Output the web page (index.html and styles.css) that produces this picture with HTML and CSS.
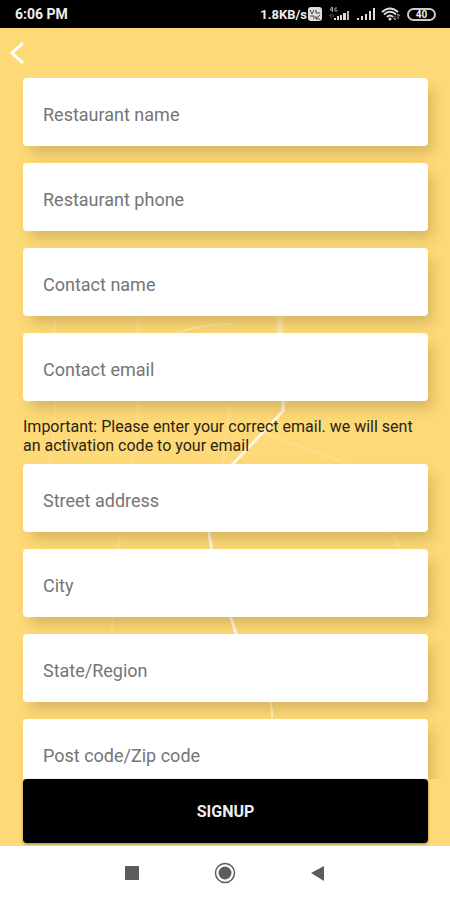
FILE: index.html
```html
<!DOCTYPE html>
<html lang="en">
<head>
    <meta charset="UTF-8">
    <meta name="viewport" content="width=device-width, initial-scale=1.0">
    <title>Restaurant Signup</title>
    <link rel="stylesheet" href="styles.css">
</head>
<body>
    <div class="status-bar">
        <span class="time">6:06 PM</span>
        <div class="status-icons">
            <span class="speed">1.8KB/s</span>
            <svg class="volte" width="14" height="14" viewBox="0 0 14 14">
                <rect x="0" y="0" width="14" height="14" rx="3" fill="#ddd"/>
                <path d="M2 3l2 4 2-4M8 3v3h4M2 9h4v3M8 12l4-4M8 9v3h4" fill="none" stroke="#444" stroke-width="1"/>
            </svg>
            <svg class="signal-4g" width="23" height="14" viewBox="0 0 23 14">
                <path d="M4 0L2 3h3M4.500 0v5M9 1H7v3h2V3" fill="none" stroke="#aaa" stroke-width="1"/>
                <path d="M3 7v5M1 9l2-2M5 7v3" fill="none" stroke="#555" stroke-width="1"/>
                <path d="M6 11h2v2H6zM9 9h2v4H9zM12 8h2v5h-2zM15 6h3v7h-3z" fill="#ddd"/>
                <path d="M19 4h2v9h-2z" fill="#bbb"/>
            </svg>
            <svg class="signal" width="18" height="14" viewBox="0 0 18 14">
                <path d="M0 11h2v2H0zM4 9h2v4H4zM8 7h2v6H8zM12 4h2v9h-2zM16 1h2v12h-2z" fill="#ddd"/>
            </svg>
            <svg class="wifi" width="20" height="14" viewBox="0 0 20 14">
                <path d="M1 5Q9 -2 17 5M3 7.500Q9 2 15 7.500M6 10Q9 7 12 10" fill="none" stroke="#ddd" stroke-width="2"/>
                <circle cx="9" cy="12" r="1.500" fill="#ddd"/>
                <path d="M14 13V9M12 11l2 2 1-1M17 7v5M16 8l1-1 2 2" fill="none" stroke="#999" stroke-width="1"/>
            </svg>
            <span class="battery">40</span>
        </div>
    </div>

    <main class="screen">
        <!-- faint road map behind the form -->
        <svg class="map" viewBox="0 0 450 818" preserveAspectRatio="none" fill="none" stroke="#fff">
            <g stroke-width="3" opacity="0.13">
                <path d="M55 280V395L40 500"/>
                <path d="M138 280V400L120 505L112 605"/>
                <path d="M230 375L222 440"/>
                <path d="M265 405L350 437L400 520"/>
            </g>
            <path d="M170 307Q200 296 232 296M180 305Q150 310 120 330" stroke-width="2" opacity="0.25"/>
            <path d="M280 280V305" stroke-width="7" opacity="0.3"/>
            <path d="M280 304Q284 340 283 383L232 437Q206 470 209 505L213 530L231 590L239 615" stroke-width="3" opacity="0.8"/>
            <path d="M239 615L268 665Q273 680 272 690" stroke-width="2" opacity="0.6"/>
        </svg>

        <header class="top-bar">
            <button class="back" type="button" aria-label="Back">
                <svg width="16" height="24" viewBox="0 0 16 24">
                    <path d="M15 2L4 12L15 22" fill="none" stroke="#fff" stroke-width="3"/>
                </svg>
            </button>
        </header>

        <form class="signup-form">
            <div class="fields">
                <input type="text" aria-label="Restaurant name" placeholder="Restaurant name">
                <input type="tel" aria-label="Restaurant phone" placeholder="Restaurant phone">
                <input type="text" aria-label="Contact name" placeholder="Contact name">
                <input type="email" aria-label="Contact email" placeholder="Contact email">
                <p class="note">Important: Please enter your correct email. we will sent an activation code to your email</p>
                <input type="text" aria-label="Street address" placeholder="Street address">
                <input type="text" aria-label="City" placeholder="City">
                <input type="text" aria-label="State/Region" placeholder="State/Region">
                <input type="text" aria-label="Post code/Zip code" placeholder="Post code/Zip code">
            </div>
            <button class="signup" type="submit">SIGNUP</button>
        </form>
    </main>

    <nav class="nav-bar">
        <button type="button" aria-label="Recent apps">
            <svg width="22" height="22" viewBox="0 0 22 22"><rect x="4" y="4" width="14" height="14" fill="#5c5c5c"/></svg>
        </button>
        <button type="button" aria-label="Home">
            <svg width="22" height="22" viewBox="0 0 22 22">
                <circle cx="11" cy="11" r="9.500" fill="none" stroke="#5c5c5c" stroke-width="1.500"/>
                <circle cx="11" cy="11" r="6.500" fill="#5c5c5c"/>
            </svg>
        </button>
        <button type="button" aria-label="Back">
            <svg width="22" height="22" viewBox="0 0 22 22"><path d="M4 11L17 4V19Z" fill="#5c5c5c"/></svg>
        </button>
    </nav>
</body>
</html>
```
FILE: styles.css
```css
* {
    box-sizing: border-box;
}
body {
    display: flex;
    flex-direction: column;
    height: 100vh;
    margin: 0;
    font-family: Roboto, sans-serif;
    background-color: #fff;
}
button {
    padding: 0;
    border: none;
    background: none;
    font-family: inherit;
    cursor: pointer;
}
svg {
    display: block;
}
.status-bar {
    display: flex;
    flex-shrink: 0;
    align-items: center;
    justify-content: space-between;
    height: 28px;
    padding: 0 14px 0 15px;
    background-color: #000;
    color: #eee;
    font-size: 14px;
    font-weight: 700;
}
.status-icons {
    display: flex;
    align-items: center;
    gap: 6px;
}
.speed {
    margin-right: -5px;
    font-size: 13px;
}
.battery {
    width: 29px;
    height: 13px;
    border: 2px solid #ccc;
    border-radius: 7px;
    font-size: 10px;
    line-height: 9px;
    text-align: center;
}
.screen {
    position: relative;
    display: flex;
    flex: 1;
    flex-direction: column;
    min-height: 0;
    overflow: hidden;
    background-color: #fed977;
}
.map {
    position: absolute;
    top: 0;
    left: 0;
    width: 100%;
    height: 100%;
}
.top-bar {
    position: relative;
    display: flex;
    flex-shrink: 0;
    align-items: center;
    height: 50px;
    padding: 0 8px;
}
.signup-form {
    position: relative;
    display: flex;
    flex: 1;
    flex-direction: column;
    min-height: 0;
}
.fields {
    display: flex;
    flex: 1;
    flex-direction: column;
    gap: 17px;
    min-height: 0;
    padding: 0 22px 0 23px;
    overflow: hidden;
}
.fields input {
    flex-shrink: 0;
    width: 100%;
    height: 68px;
    padding: 4px 20px 0;
    border: none;
    border-radius: 4px;
    background-color: #fff;
    box-shadow: 6px 9px 14px -2px rgba(120, 100, 40, 0.3);
    color: #222;
    font-family: inherit;
    font-size: 18px;
}
.fields input::placeholder {
    color: #757575;
}
.note {
    flex-shrink: 0;
    margin: -1px 0 -8px;
    color: #2b2413;
    font-size: 16px;
    line-height: 19px;
}
.signup {
    flex-shrink: 0;
    height: 64px;
    margin: 0 22px 3px 23px;
    border-radius: 4px;
    background-color: #000;
    box-shadow: 0 1px 3px rgba(0, 0, 0, 0.4);
    color: #eee;
    font-size: 16px;
    font-weight: 700;
}
.nav-bar {
    display: flex;
    flex-shrink: 0;
    align-items: center;
    justify-content: center;
    gap: 71px;
    height: 54px;
    background-color: #fff;
}
```
